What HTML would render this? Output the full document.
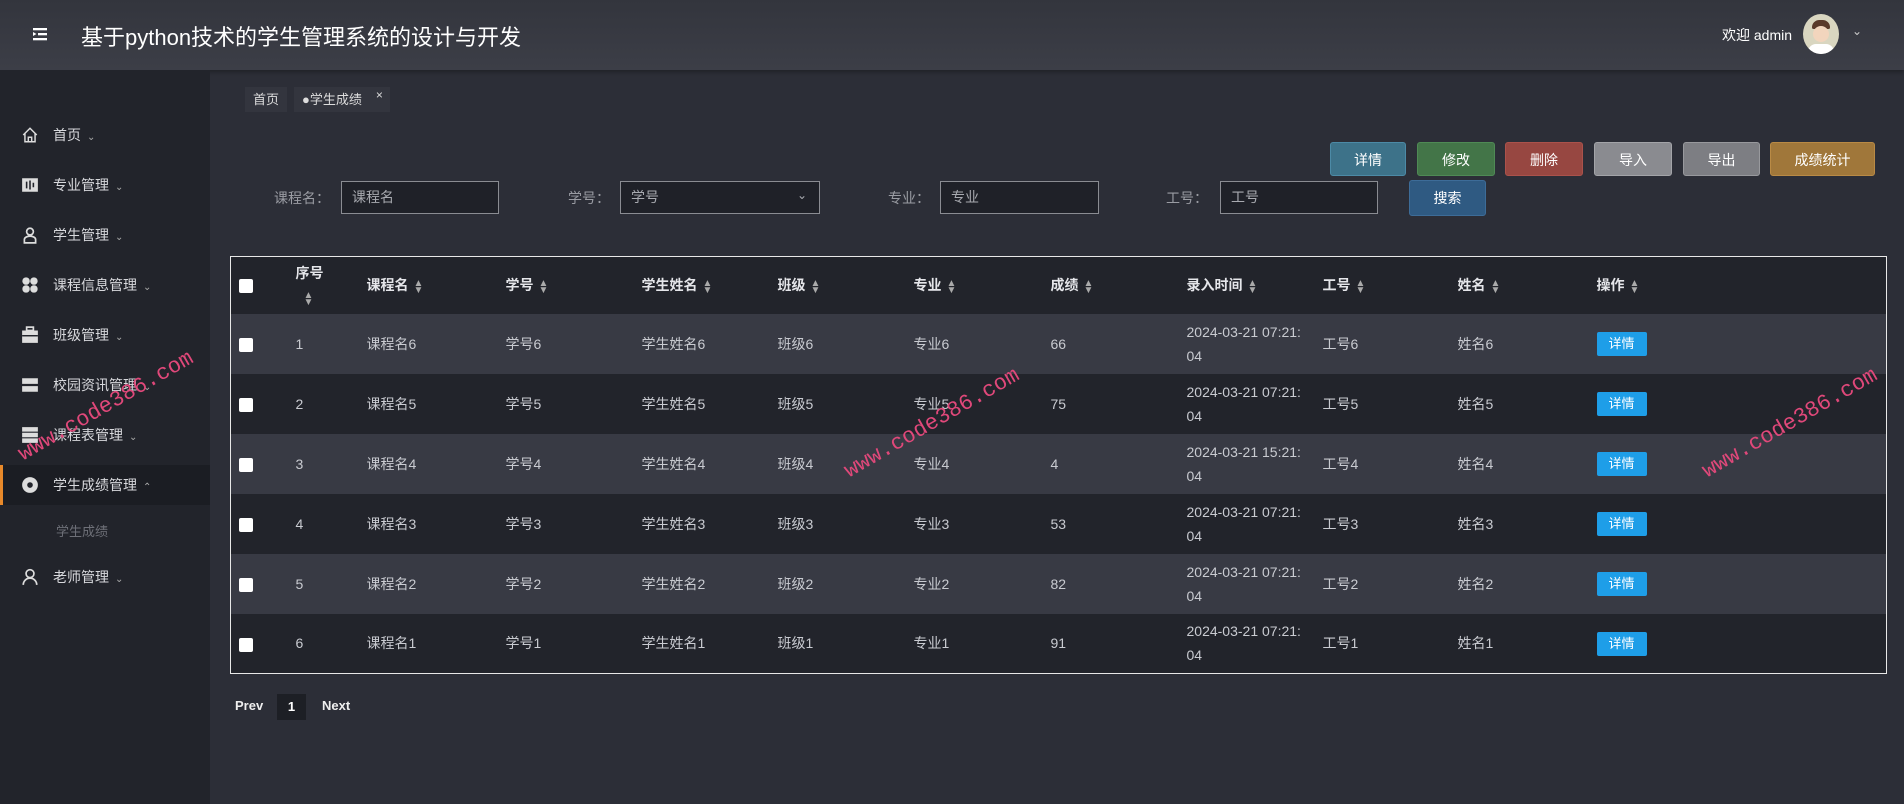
<!DOCTYPE html>
<html><head><meta charset="utf-8"><style>
*{margin:0;padding:0;box-sizing:border-box}
body{width:1904px;height:804px;overflow:hidden;background:#2c2e37;font-family:"Liberation Sans","Noto Sans CJK SC",sans-serif;color:#c9cbd1;font-size:14px;position:relative}
.hdr{position:absolute;left:0;top:0;width:1904px;height:70px;background:linear-gradient(#33353d,#3c3e47);box-shadow:0 2px 4px rgba(0,0,0,.3)}
.hdr .t{position:absolute;left:81px;top:20px;font-size:22px;color:#fff}
.side{position:absolute;left:0;top:70px;width:210px;height:734px;background:#22242b}
.mi{position:absolute;left:0;width:210px;height:40px;line-height:40px;padding-left:53px;color:#d8d9dd;font-size:14px}
.mi svg{position:absolute;left:21px;top:11px;width:18px;height:18px}
.mi .c{font-size:10px;color:#aaa;margin-left:6px}
.abs{position:absolute}
.tab{position:absolute;top:87px;height:25px;line-height:25px;background:#33353e;color:#ddd;font-size:13px;padding:0 8px}
.btn{position:absolute;top:142px;height:34px;line-height:34px;text-align:center;color:#fff;font-size:14px;border-radius:3px}
.lbl{position:absolute;top:188px;color:#9a9ca3;font-size:14px}
.inp{position:absolute;top:181px;height:33px;border:1px solid #8a8c92;background:#1f2128;color:#a8aab0;padding-left:10px;line-height:31px;font-size:14px}
table{position:absolute;left:230px;top:256px;width:1657px;border:1px solid #e8e8e8;border-collapse:collapse}
td,th{text-align:left;font-size:14px;vertical-align:middle;padding:0}
th{height:57px;background:#22242b;color:#e5e6ea;font-weight:bold}
td{height:60px;color:#c9cbd1;line-height:24px}
tr.l td{background:#383a44}
tr.d td{background:#22242b}
.cb{display:inline-block;width:14px;height:14px;background:#fff;border-radius:2px;margin-left:8px;vertical-align:middle}
.s{display:inline-block;font-size:10px;line-height:7px;vertical-align:middle;margin-left:5px;color:#aaa}
.db{display:inline-block;width:50px;height:24px;line-height:24px;text-align:center;background:#1e9ee8;color:#fff;font-size:13px;border-radius:2px}
.wm{position:absolute;color:#e0487a;font-family:"Liberation Mono",monospace;font-size:22px;transform:rotate(-30deg);transform-origin:left top;white-space:nowrap}
</style></head><body>
<div class="hdr">
<svg class="abs" style="left:33px;top:27px" width="14" height="14" viewBox="0 0 14 14" fill="#fff"><rect x="0" y="1" width="14" height="2.3"/><rect x="5" y="6" width="9" height="2.3"/><rect x="0" y="11" width="14" height="2.3"/><path d="M0 5 L3.5 7 L0 9Z"/></svg>
<div class="t">基于python技术的学生管理系统的设计与开发</div>
<div class="abs" style="left:1722px;top:25px;color:#fff;font-size:14px">欢迎 admin</div>
<div class="abs" style="left:1803px;top:14px;width:36px;height:40px;border-radius:50%;background:#d9d6c0;overflow:hidden"><div style="position:absolute;left:9px;top:6px;width:18px;height:9px;background:#5a3a2a;border-radius:9px 9px 2px 2px"></div><div style="position:absolute;left:10px;top:12px;width:16px;height:16px;background:#f2d5bd;border-radius:50%"></div><div style="position:absolute;left:5px;top:30px;width:26px;height:12px;background:#fff;border-radius:8px 8px 0 0"></div></div>
<div class="abs" style="left:1852px;top:24px;color:#ccc;font-size:12px">&#8964;</div>
</div>
<div class="side">
<div class="mi" style="top:45px"><svg viewBox="0 0 16 16" fill="none" stroke="#ddd" stroke-width="1.3"><path d="M2 8L8 2l6 6M3.5 6.5V14h9V6.5M6.5 14v-4h3v4"/></svg>首页<span class="c">&#8964;</span></div>
<div class="mi" style="top:95px"><svg viewBox="0 0 16 16"><rect x="1" y="2" width="14" height="12" fill="#ddd"/><path d="M5 5v6M8 4v8M11 6v4" stroke="#22242b" stroke-width="1.4"/></svg>专业管理<span class="c">&#8964;</span></div>
<div class="mi" style="top:145px"><svg viewBox="0 0 16 16" fill="none" stroke="#ddd" stroke-width="1.5"><circle cx="8" cy="5" r="3"/><path d="M3 15v-3a5 3 0 0 1 10 0v3z"/></svg>学生管理<span class="c">&#8964;</span></div>
<div class="mi" style="top:195px"><svg viewBox="0 0 16 16" fill="#ddd"><circle cx="4.5" cy="4.5" r="3.3"/><circle cx="11.5" cy="4.5" r="3.3"/><circle cx="4.5" cy="11.5" r="3.3"/><circle cx="11.5" cy="11.5" r="3.3"/></svg>课程信息管理<span class="c">&#8964;</span></div>
<div class="mi" style="top:245px"><svg viewBox="0 0 16 16" fill="#ddd"><rect x="5" y="1" width="6" height="3" fill="none" stroke="#ddd" stroke-width="1.5"/><rect x="1" y="4" width="14" height="11"/><rect x="1" y="8" width="14" height="1.3" fill="#22242b"/></svg>班级管理<span class="c">&#8964;</span></div>
<div class="mi" style="top:295px"><svg viewBox="0 0 16 16" fill="#ddd"><rect x="1" y="2" width="14" height="5"/><rect x="1" y="9" width="14" height="5"/></svg>校园资讯管理<span class="c">&#8964;</span></div>
<div class="mi" style="top:345px"><svg viewBox="0 0 16 16" fill="#ddd"><rect x="1" y="1" width="14" height="4"/><rect x="1" y="6" width="14" height="4"/><rect x="1" y="11" width="14" height="4"/></svg>课程表管理<span class="c">&#8964;</span></div>
<div class="mi" style="top:395px;background:#1b1d23;border-left:3px solid #e8892a;padding-left:50px"><svg style="left:18px" viewBox="0 0 16 16"><circle cx="8" cy="8" r="7" fill="#ddd"/><circle cx="8" cy="8" r="2.5" fill="#22242b"/></svg>学生成绩管理<span class="c">&#8963;</span></div>
<div class="mi" style="top:442px;color:#6e7078;padding-left:56px;font-size:13px">学生成绩</div>
<div class="mi" style="top:487px"><svg viewBox="0 0 16 16" fill="none" stroke="#ddd" stroke-width="1.5"><circle cx="8" cy="5" r="3.5"/><path d="M2 15a6 6 0 0 1 12 0"/></svg>老师管理<span class="c">&#8964;</span></div>
</div>
<div class="tab" style="left:245px">首页</div>
<div class="tab" style="left:294px;padding-right:28px">●学生成绩<span style="position:absolute;right:7px;top:-4px;font-size:12px">×</span></div>
<div class="btn" style="left:1330px;width:76px;background:#3d7289;border:1px solid #4c8aa6">详情</div>
<div class="btn" style="left:1417px;width:78px;background:#437548;border:1px solid #4f8a55">修改</div>
<div class="btn" style="left:1505px;width:78px;background:#974741;border:1px solid #ab524b">删除</div>
<div class="btn" style="left:1594px;width:78px;background:#8a8b90;border:1px solid #a3a4a8">导入</div>
<div class="btn" style="left:1683px;width:77px;background:#7d7e83;border:1px solid #98999d">导出</div>
<div class="btn" style="left:1770px;width:105px;background:#a0773a;border:1px solid #b98a45">成绩统计</div>
<div class="lbl" style="left:274px">课程名：</div>
<div class="inp" style="left:341px;width:158px">课程名</div>
<div class="lbl" style="left:568px">学号：</div>
<div class="inp" style="left:620px;width:200px">学号<span style="position:absolute;right:12px;top:-2px;font-size:12px">&#8964;</span></div>
<div class="lbl" style="left:888px">专业：</div>
<div class="inp" style="left:940px;width:159px">专业</div>
<div class="lbl" style="left:1166px">工号：</div>
<div class="inp" style="left:1220px;width:158px">工号</div>
<div class="btn" style="left:1409px;top:180px;width:77px;height:36px;background:#2f5a82;border:1px solid #3d6c98;line-height:34px">搜索</div>
<table>
<colgroup><col style="width:65px"><col style="width:71px"><col style="width:139px"><col style="width:136px"><col style="width:136px"><col style="width:136px"><col style="width:137px"><col style="width:136px"><col style="width:136px"><col style="width:135px"><col style="width:139px"><col></colgroup>
<tr><th><span class="cb"></span></th><th style="line-height:24px">序号<br><span class="s" style="margin-left:8px">▲<br>▼</span></th><th>课程名<span class="s">▲<br>▼</span></th><th>学号<span class="s">▲<br>▼</span></th><th>学生姓名<span class="s">▲<br>▼</span></th><th>班级<span class="s">▲<br>▼</span></th><th>专业<span class="s">▲<br>▼</span></th><th>成绩<span class="s">▲<br>▼</span></th><th>录入时间<span class="s">▲<br>▼</span></th><th>工号<span class="s">▲<br>▼</span></th><th>姓名<span class="s">▲<br>▼</span></th><th>操作<span class="s">▲<br>▼</span></th></tr>
<tr class="l"><td><span class="cb"></span></td><td>1</td><td>课程名6</td><td>学号6</td><td>学生姓名6</td><td>班级6</td><td>专业6</td><td>66</td><td>2024-03-21 07:21:<br>04</td><td>工号6</td><td>姓名6</td><td><span class="db">详情</span></td></tr>
<tr class="d"><td><span class="cb"></span></td><td>2</td><td>课程名5</td><td>学号5</td><td>学生姓名5</td><td>班级5</td><td>专业5</td><td>75</td><td>2024-03-21 07:21:<br>04</td><td>工号5</td><td>姓名5</td><td><span class="db">详情</span></td></tr>
<tr class="l"><td><span class="cb"></span></td><td>3</td><td>课程名4</td><td>学号4</td><td>学生姓名4</td><td>班级4</td><td>专业4</td><td>4</td><td>2024-03-21 15:21:<br>04</td><td>工号4</td><td>姓名4</td><td><span class="db">详情</span></td></tr>
<tr class="d"><td><span class="cb"></span></td><td>4</td><td>课程名3</td><td>学号3</td><td>学生姓名3</td><td>班级3</td><td>专业3</td><td>53</td><td>2024-03-21 07:21:<br>04</td><td>工号3</td><td>姓名3</td><td><span class="db">详情</span></td></tr>
<tr class="l"><td><span class="cb"></span></td><td>5</td><td>课程名2</td><td>学号2</td><td>学生姓名2</td><td>班级2</td><td>专业2</td><td>82</td><td>2024-03-21 07:21:<br>04</td><td>工号2</td><td>姓名2</td><td><span class="db">详情</span></td></tr>
<tr class="d"><td><span class="cb"></span></td><td>6</td><td>课程名1</td><td>学号1</td><td>学生姓名1</td><td>班级1</td><td>专业1</td><td>91</td><td>2024-03-21 07:21:<br>04</td><td>工号1</td><td>姓名1</td><td><span class="db">详情</span></td></tr>
</table>
<div class="abs" style="left:235px;top:698px;color:#eee;font-size:13px;font-weight:bold">Prev</div>
<div class="abs" style="left:277px;top:694px;width:29px;height:26px;line-height:26px;text-align:center;background:#1d1f25;color:#fff;font-size:13px;font-weight:bold">1</div>
<div class="abs" style="left:322px;top:698px;color:#eee;font-size:13px;font-weight:bold">Next</div>
<div class="wm" style="left:14px;top:445px">www.code386.com</div>
<div class="wm" style="left:840px;top:462px">www.code386.com</div>
<div class="wm" style="left:1698px;top:462px">www.code386.com</div>
</body></html>
